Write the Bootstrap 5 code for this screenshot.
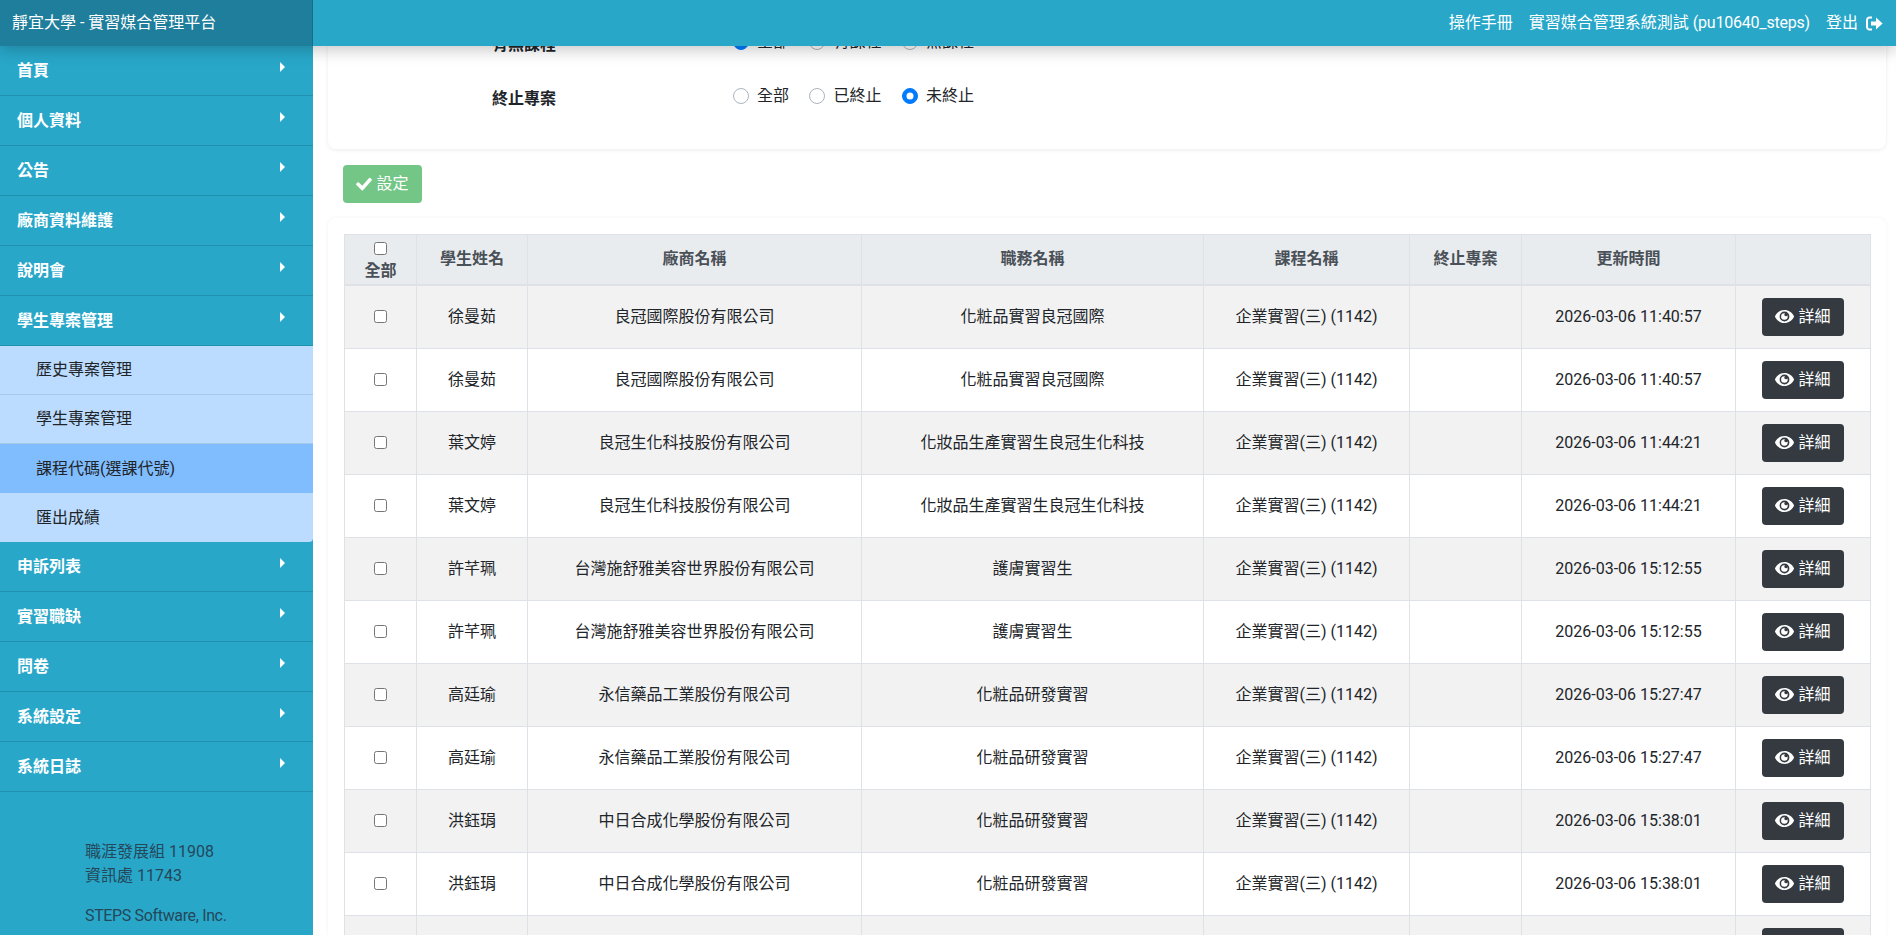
<!DOCTYPE html>
<html lang="zh-Hant">
  <head>
    <meta charset="UTF-8" />
    <title>靜宜大學 - 實習媒合管理平台</title>
    <link
      rel="stylesheet"
      href="https://cdn.jsdelivr.net/npm/bootstrap@5.3.0/dist/css/bootstrap.min.css"
    />
    <style>
      html, body {
        height: 100%;
        overflow: hidden;
      }
      body {
        font-family: "Roboto", "Noto Sans CJK TC", sans-serif;
        font-size: 16px;
        color: #212529;
        background: #fff;
      }

      /* top bar */
      .top-bar {
        height: 46px;
        background: #28a7c9;
        color: #fff;
        box-shadow: 0 4px 16px rgba(0, 0, 0, 0.22);
        position: relative;
        z-index: 5;
      }
      .top-brand {
        width: 313px;
        padding-left: 12px;
        background: #1f7e9b;
        border-right: 1px solid #1b6d86;
      }
      .top-links {
        gap: 16px;
        padding-right: 13px;
      }
      .top-links a {
        color: #fff;
        text-decoration: none;
      }
      .user-code {
        letter-spacing: -0.2px;
      }

      /* side menu */
      .side-menu {
        width: 313px;
        background: #28a7c9;
      }
      .menu-head {
        height: 50px;
        padding-left: 17px;
        color: #fff;
        font-weight: 700;
        border-bottom: 1px solid #2092b0;
      }
      .menu-caret {
        width: 0;
        height: 0;
        margin: -8px 28px 0 auto;
        border-left: 5px solid #fff;
        border-top: 5px solid transparent;
        border-bottom: 5px solid transparent;
      }
      .menu-sub {
        background: #bcdcff;
        border-bottom-right-radius: 4px;
      }
      .menu-sub-item {
        height: 49px;
        padding-left: 36px;
        border-bottom: 1px solid #a5c9e8;
      }
      .menu-sub-item.is-current {
        background: #80bdff;
        border-bottom: 0;
      }
      .menu-sub-item:last-child {
        border-bottom: 0;
      }
      .side-foot {
        padding: 48px 0 0 85px;
        color: #24485a;
        line-height: 24px;
      }
      .side-foot p {
        margin-bottom: 16px;
      }
      .side-foot p:last-child {
        letter-spacing: -0.35px;
      }

      /* content */
      .content-pane {
        padding: 0 10px 0 15px;
      }
      .panel-box {
        border-radius: 8px;
        box-shadow: 0 1px 4px rgba(0, 0, 0, 0.08);
      }
      .filter-box {
        height: 119px;
        margin-top: -16px;
        padding-left: 164px;
      }
      .filter-row {
        height: 46px;
      }
      .filter-row.is-cut {
        height: 54px;
      }
      .filter-label {
        width: 241px;
        font-weight: 700;
        padding-top: 3px;
      }
      .filter-row .form-check-inline {
        margin: 0 16.5px 0 0;
        padding-left: 24px;
        min-height: 0;
      }
      .filter-row .form-check-input {
        width: 16px;
        height: 16px;
        margin: 4px 0 0 -24px;
        border-color: #adb5bd;
      }
      .filter-row .form-check-input:checked {
        background-color: #007bff;
        border-color: #007bff;
      }
      .set-btn {
        width: 79px;
        height: 38px;
        margin: 16px 0 0 15px;
        padding: 0;
        background: #73c686;
        border: 0;
        color: #fff;
        border-radius: 4px;
        font-weight: 400;
      }
      .list-box {
        margin-top: 15px;
        padding: 16px 16px 0;
        box-shadow: 0 0 4px rgba(0, 0, 0, 0.05);
      }

      /* table */
      .case-table {
        width: 1526px;
        table-layout: fixed;
        margin: 0;
        border-collapse: collapse;
      }
      .case-table th,
      .case-table td {
        padding: 12px;
        border: 1px solid #dee2e6;
        text-align: center;
        vertical-align: middle;
        box-shadow: none;
      }
      .case-table thead th {
        height: 50px;
        padding: 0 12px;
        background: #e9ecef;
        color: #495057;
        border-bottom: 2px solid #dee2e6;
        line-height: 24px;
      }
      .case-table thead th:first-child {
        padding-top: 6px;
      }
      .case-table thead th input {
        margin-bottom: 4px;
      }
      .case-table tbody tr:nth-child(odd) td {
        background: #f2f2f2;
      }
      .case-table td {
        height: 63px;
        color: #212529;
      }
      .case-table input[type="checkbox"] {
        display: block;
        margin-left: auto;
        margin-right: auto;
      }
      .detail-btn {
        width: 82px;
        height: 38px;
        padding: 0;
        background: #343a40;
        color: #fff;
        border: 0;
        border-radius: 4px;
      }
    </style>
  </head>
  <body>
    <div class="d-flex flex-column h-100">
      <!-- 上方列 -->
      <header class="top-bar d-flex align-items-center flex-shrink-0">
        <div class="top-brand h-100 d-flex align-items-center">靜宜大學 - 實習媒合管理平台</div>
        <div class="top-links ms-auto d-flex align-items-center">
          <a href="#">操作手冊</a>
          <a href="#">實習媒合管理系統測試 <span class="user-code">(pu10640_steps)</span></a>
          <a href="#" class="d-flex align-items-center gap-2">登出
            <svg width="17" height="15" viewBox="0 0 17 15" fill="#fff">
              <path d="M6 1.5H3.5A2.5 2.5 0 0 0 1 4v7a2.5 2.5 0 0 0 2.5 2.5H6" fill="none" stroke="#fff" stroke-width="2" />
              <path d="M5 5.5h5V1.6l6.6 5.9-6.6 5.9V9.5H5z" />
            </svg>
          </a>
        </div>
      </header>

      <div class="d-flex flex-grow-1 overflow-hidden">
        <!-- 左側選單 -->
        <nav id="side-menu" class="side-menu flex-shrink-0"></nav>

        <!-- 內容 -->
        <main class="content-pane flex-grow-1 overflow-hidden">
          <section class="panel-box filter-box bg-white">
            <div class="filter-row is-cut d-flex">
              <div class="filter-label">有無課程</div>
              <div>
                <label class="form-check form-check-inline"><input class="form-check-input" type="radio" name="f1" checked /> 全部</label>
                <label class="form-check form-check-inline"><input class="form-check-input" type="radio" name="f1" /> 有課程</label>
                <label class="form-check form-check-inline"><input class="form-check-input" type="radio" name="f1" /> 無課程</label>
              </div>
            </div>
            <div class="filter-row d-flex">
              <div class="filter-label">終止專案</div>
              <div>
                <label class="form-check form-check-inline"><input class="form-check-input" type="radio" name="f2" /> 全部</label>
                <label class="form-check form-check-inline"><input class="form-check-input" type="radio" name="f2" /> 已終止</label>
                <label class="form-check form-check-inline"><input class="form-check-input" type="radio" name="f2" checked /> 未終止</label>
              </div>
            </div>
          </section>

          <button class="btn set-btn d-flex align-items-center justify-content-center gap-1" type="button">
            <svg width="16" height="14" viewBox="0 0 16 14" fill="#fff"><path d="M5.7 13.2.4 7.9a.9.9 0 0 1 0-1.3l1.2-1.2a.9.9 0 0 1 1.3 0l3.4 3.4L13.1 1.1a.9.9 0 0 1 1.3 0l1.2 1.2a.9.9 0 0 1 0 1.3L7 13.2a.9.9 0 0 1-1.3 0z" /></svg>
            設定
          </button>

          <section class="panel-box list-box bg-white">
            <table class="table case-table">
              <colgroup>
                <col style="width: 72px" /><col style="width: 111px" /><col style="width: 334px" /><col style="width: 342px" />
                <col style="width: 206px" /><col style="width: 112px" /><col style="width: 214px" /><col style="width: 135px" />
              </colgroup>
              <thead>
                <tr>
                  <th><input type="checkbox" />全部</th>
                  <th>學生姓名</th>
                  <th>廠商名稱</th>
                  <th>職務名稱</th>
                  <th>課程名稱</th>
                  <th>終止專案</th>
                  <th>更新時間</th>
                  <th></th>
                </tr>
              </thead>
              <tbody id="case-rows"></tbody>
            </table>
          </section>
        </main>
      </div>
    </div>

    <script src="https://cdn.jsdelivr.net/npm/bootstrap@5.3.0/dist/js/bootstrap.bundle.min.js"></script>
    <script>
      const menuBefore = ['首頁', '個人資料', '公告', '廠商資料維護', '說明會', '學生專案管理'];
      const menuSub = ['歷史專案管理', '學生專案管理', '課程代碼(選課代號)', '匯出成績'];
      const menuAfter = ['申訴列表', '實習職缺', '問卷', '系統設定', '系統日誌'];

      const rows = [
        ['徐曼茹', '良冠國際股份有限公司', '化粧品實習良冠國際', '2026-03-06 11:40:57'],
        ['葉文婷', '良冠生化科技股份有限公司', '化妝品生產實習生良冠生化科技', '2026-03-06 11:44:21'],
        ['許芊珮', '台灣施舒雅美容世界股份有限公司', '護膚實習生', '2026-03-06 15:12:55'],
        ['高廷瑜', '永信藥品工業股份有限公司', '化粧品研發實習', '2026-03-06 15:27:47'],
        ['洪鈺琄', '中日合成化學股份有限公司', '化粧品研發實習', '2026-03-06 15:38:01'],
      ];

      const menuHead = (name) =>
        `<div class="menu-head d-flex align-items-center">${name}<span class="menu-caret"></span></div>`;

      document.getElementById('side-menu').innerHTML =
        menuBefore.map(menuHead).join('') +
        '<div class="menu-sub">' +
        menuSub
          .map(
            (name, i) =>
              `<div class="menu-sub-item d-flex align-items-center${i === 2 ? ' is-current' : ''}">${name}</div>`
          )
          .join('') +
        '</div>' +
        menuAfter.map(menuHead).join('') +
        `<div class="side-foot"><p>職涯發展組 11908<br />資訊處 11743</p><p>STEPS Software, Inc.</p></div>`;

      const eyeIcon = `<svg width="19" height="13" viewBox="0 0 19 13" fill="#fff"><path fill-rule="evenodd" d="M9.5 0C5.4 0 1.9 2.4.1 6c-.1.3-.1.7 0 1 1.8 3.6 5.3 6 9.4 6s7.6-2.4 9.4-6c.1-.3.1-.7 0-1C17.1 2.4 13.6 0 9.5 0zm0 11.4a4.9 4.9 0 1 1 0-9.8 4.9 4.9 0 0 1 0 9.8zm0-8.2a3.3 3.3 0 1 0 3.2 3.3c0-.5-.1-.9-.3-1.3a1.6 1.6 0 1 1-2.2-2c-.2 0-.4 0-.7 0z"/></svg>`;
      const detailBtn = `<button class="btn detail-btn d-inline-flex align-items-center justify-content-center gap-1" type="button">${eyeIcon}詳細</button>`;

      const rowHtml = (r) => `
        <tr>
          <td><input type="checkbox" /></td>
          <td>${r[0]}</td>
          <td>${r[1]}</td>
          <td>${r[2]}</td>
          <td>企業實習(三) (1142)</td>
          <td></td>
          <td>${r[3]}</td>
          <td>${detailBtn}</td>
        </tr>`;

      // 每筆資料連續出現兩列
      document.getElementById('case-rows').innerHTML =
        rows.map((r) => rowHtml(r) + rowHtml(r)).join('') +
        `<tr><td><input type="checkbox" /></td><td></td><td></td><td></td><td></td><td></td><td></td><td>${detailBtn}</td></tr>`;
    </script>
  </body>
</html>
